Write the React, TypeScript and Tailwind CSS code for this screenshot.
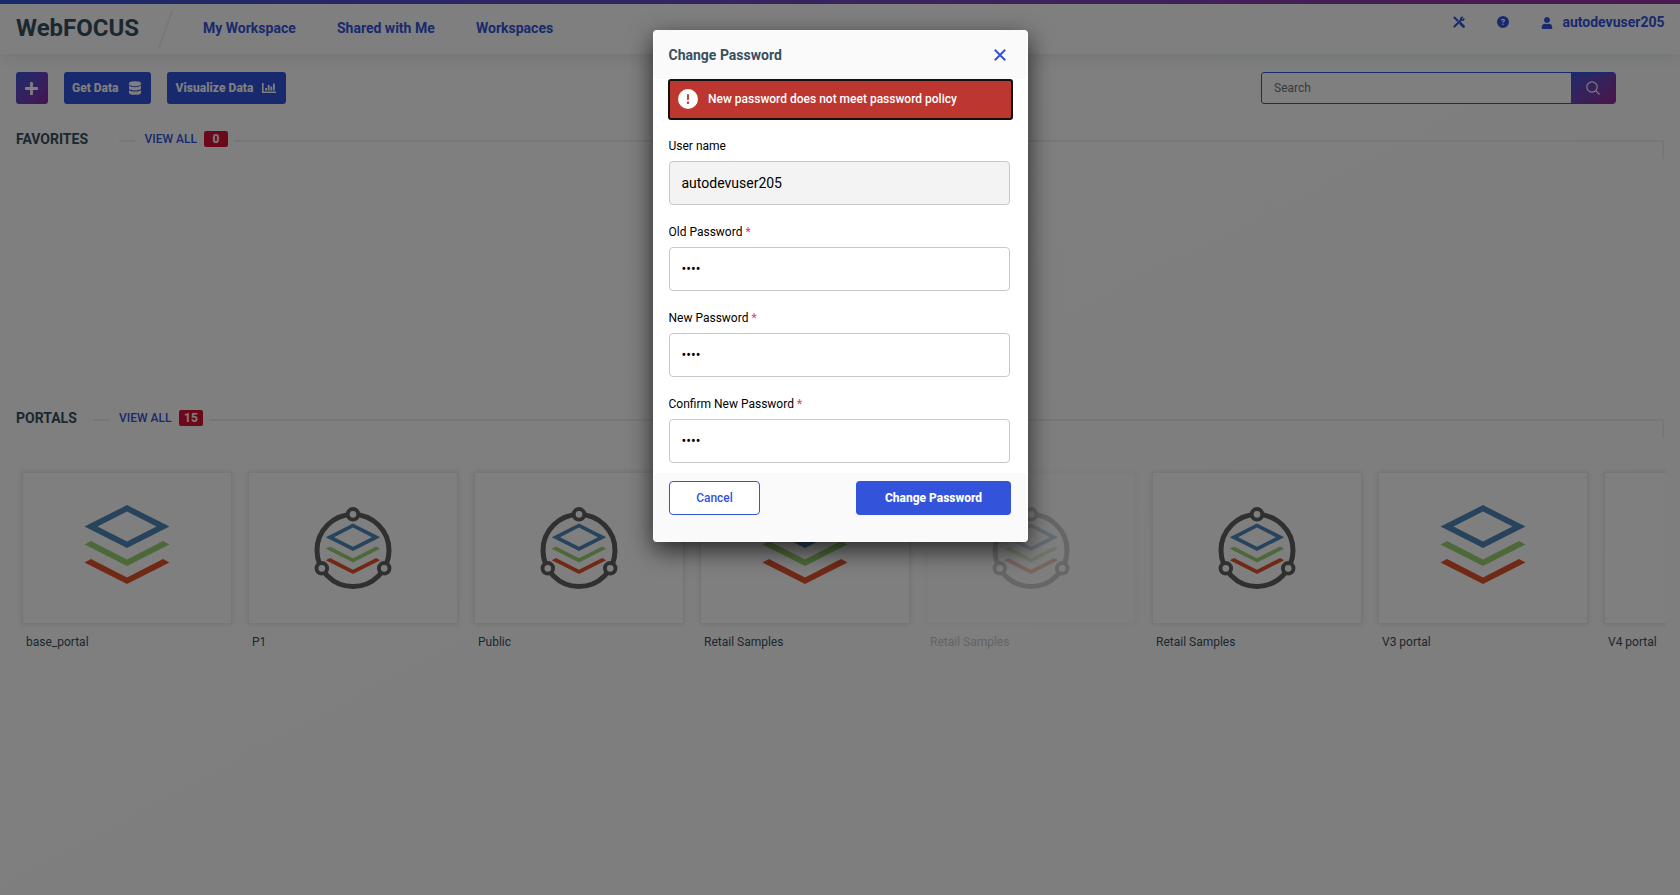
import React from "react";
import { FaPlus, FaDatabase, FaUser } from "react-icons/fa";
import { FaCircleExclamation, FaCircleQuestion } from "react-icons/fa6";

function LayersShape() {
  return (
    <>
      <path d="M0 -21.5 L42.5 0 L0 21.5 L-42.5 0Z M0 -15 L-29.5 0 L0 15 L29.5 0Z" fill="#5086b8" fillRule="evenodd" />
      <path d="M-42.5 18 L-36 14.5 L0 32.8 L36 14.5 L42.5 18 L0 39.5Z" fill="#9cd273" />
      <path d="M-42.5 36 L-36 32.5 L0 50.8 L36 32.5 L42.5 36 L0 57.5Z" fill="#e2532d" />
    </>
  );
}

function LayersIcon() {
  return (
    <svg width="208" height="150" viewBox="0 0 208 150">
      <g transform="translate(104 53.6)"><LayersShape /></g>
    </svg>
  );
}

function PortalIcon() {
  return (
    <svg width="208" height="150" viewBox="0 0 208 150">
      <circle cx="104" cy="77.5" r="36" fill="none" stroke="#606060" strokeWidth="5" />
      {[[104, 41.3], [72.8, 95.3], [135.2, 95.3]].map(([x, y]) => (
        <circle key={x} cx={x} cy={y} r="5.3" fill="#fff" stroke="#606060" strokeWidth="3.9" />
      ))}
      <g transform="translate(104 64.2) scale(.64)"><LayersShape /></g>
    </svg>
  );
}

const portals = [
  { name: "base_portal", kind: "layers" },
  { name: "P1", kind: "portal" },
  { name: "Public", kind: "portal" },
  { name: "Retail Samples", kind: "layers" },
  { name: "Retail Samples", kind: "portal", faded: true },
  { name: "Retail Samples", kind: "portal" },
  { name: "V3 portal", kind: "layers" },
  { name: "V4 portal", kind: "empty" },
];

function SectionHead({ title, count, titleClass, linkClass }: { title: string; count: number; titleClass: string; linkClass: string }) {
  return (
    <div className="flex h-7 items-start pl-4 pr-4">
      <h2 className={"text-[14px] font-bold leading-4 text-[#37505f] " + titleClass}>{title}</h2>
      <span className="mt-[9px] h-[2px] w-4 shrink-0 bg-[#eeeeee]" />
      <a className={"shrink-0 text-[12px] font-medium leading-4 text-[#3353db] " + linkClass}>VIEW ALL</a>
      <span className="h-4 w-6 shrink-0 rounded-[2px] bg-[#db1139] text-center text-[12px] font-bold leading-4 text-white">{count}</span>
      <span className="ml-[6px] mt-[9px] h-[19px] flex-1 border-r-2 border-t-2 border-[#eeeeee]" />
    </div>
  );
}

function Field({ label, value, required, disabled }: { label: string; value: string; required?: boolean; disabled?: boolean }) {
  return (
    <div className="h-[86px]">
      <label className="-ml-[0.5px] block h-[23px] text-[12px] leading-4 text-black">
        {label}
        {required && <span className="text-[#e0405a]"> *</span>}
      </label>
      <input
        readOnly
        type={disabled ? "text" : "password"}
        value={value}
        className={"block h-11 w-[341px] rounded-[4px] border border-[#c8c8c8] pl-[11.5px] text-[14px] text-black outline-none " + (disabled ? "bg-[#f3f3f3]" : "bg-white")}
      />
    </div>
  );
}

export default function App() {
  return (
    <div className="relative h-[895px] w-[1680px] overflow-hidden bg-gradient-to-br from-white to-[#fcfcfc] font-[Roboto,sans-serif]">
      <div className="h-1 bg-gradient-to-r from-[#3353db] to-[#9f2fa8]" />
      <header className="flex h-[50px] bg-white pl-4 shadow-[0_2px_16px_rgba(55,80,95,0.14)]">
        <div className="w-[142px] pt-[10px] text-[24px] font-bold leading-7 text-[#37505f]">WebFOCUS</div>
        <svg width="15" height="38" className="mt-[7px]"><path d="M14 0 L1 37" stroke="#f0f0f0" strokeWidth="2" /></svg>
        <nav className="flex pl-[30px] pt-[16px] text-[14px] font-bold leading-4 text-[#3353db]">
          <a className="w-[134px]">My Workspace</a>
          <a className="w-[139px]">Shared with Me</a>
          <a>Workspaces</a>
        </nav>
        <div className="ml-auto flex pr-[15.5px] pt-[12px] text-[#3353db]">
          <svg width="12" height="12" viewBox="0 0 12 12" className="mr-8" fill="none" stroke="currentColor">
            <path d="M.8 1 L5 5" strokeWidth="2" />
            <path d="M7.6 7.6 L10.5 10.5" strokeWidth="2.8" strokeLinecap="round" />
            <path d="M1.4 10.6 L8 4" strokeWidth="2.1" strokeLinecap="round" />
            <path d="M9.7 .9 L7.9 2.4 L8.1 4 L9.8 4.2 L11.3 2.4" strokeWidth="1.7" />
          </svg>
          <FaCircleQuestion className="mr-8 size-[12px]" />
          <FaUser className="mr-[9.5px] mt-[0.5px] h-[12px] w-[12px]" />
          <span className="mt-[-2px] text-[14px] font-bold leading-4">autodevuser205</span>
        </div>
      </header>

      <div className="flex h-[50px] items-end pl-4 pr-16">
        <button className="mr-4 flex size-8 items-center justify-center rounded-[3px] bg-gradient-to-br from-[#3353db] to-[#8a24a5] pr-px text-white"><FaPlus size={15} /></button>
        <button className="mr-4 flex h-8 w-[87px] items-center justify-between rounded-[3px] bg-[#3353db] pl-2 pr-[10px] text-[12px] font-extrabold text-white">Get Data <FaDatabase className="h-[14px] w-[12px]" /></button>
        <button className="flex h-8 w-[119px] items-center justify-between rounded-[3px] bg-[#3353db] pl-[8.5px] pr-[10px] text-[12px] font-extrabold tracking-[0.06px] text-white">
          Visualize Data
          <svg width="14" height="12" fill="currentColor"><path d="M0 1h1.6v8.6H14V11H0zM3.2 6h1.8v2.5H3.2zM5.8 3h1.8v5.5H5.8zM8.4 4.5h1.8v4H8.4zM11 1.5h1.8v7H11z" /></svg>
        </button>
        <div className="ml-auto flex h-8 w-[355px] overflow-hidden rounded-[3px] border border-[#3353db] bg-white">
          <span className="flex-1 pl-3 text-[12px] leading-[30px] text-[#757575]">Search</span>
          <span className="-my-px -mr-px flex w-[45px] items-center justify-center bg-gradient-to-br from-[#3353db] to-[#94218f] pr-[2px] text-white">
            <svg width="14" height="14" viewBox="0 0 14 14" fill="none" stroke="currentColor" strokeWidth="1.2"><circle cx="6" cy="6" r="5.2" /><path d="M9.7 9.7 L13.5 13.5" /></svg>
          </span>
        </div>
      </div>

      <div className="mt-[27px] h-[279px]"><SectionHead title="FAVORITES" count={0} titleClass="w-[103px]" linkClass="ml-[9.5px] w-[59.5px]" /></div>
      <SectionHead title="PORTALS" count={15} titleClass="w-[77px]" linkClass="ml-[10px] w-[60px]" />

      <div className="mr-[14px] flex gap-4 overflow-hidden pb-8 pl-[22px] pt-[34px]">
        {portals.map((p, i) => (
          <div key={i} className={"w-[210px] shrink-0 " + (p.faded ? "opacity-30" : "")}>
            <div className="h-[152px] border border-[#ececec] bg-white shadow-[0_0_5px_rgba(0,0,0,0.12)]">
              {p.kind === "layers" && <LayersIcon />}
              {p.kind === "portal" && <PortalIcon />}
            </div>
            <div className="pl-1 pt-[10px] text-[12px] leading-4 text-[#37505f]">{p.name}</div>
          </div>
        ))}
      </div>

      <div className="absolute inset-0 bg-black/50">
        <section className="ml-[653px] mt-[30px] flex h-[512px] w-[375px] flex-col rounded-[4px] bg-white shadow-[0_8px_24px_rgba(0,0,0,0.7)]">
          <div className="mx-px flex h-[49px] items-center justify-between rounded-[4px] bg-[#fafafa] pl-[14.5px] pr-[21px]">
            <h1 className="pt-[2px] text-[14px] font-bold text-[#37505f]">Change Password</h1>
            <svg width="12" height="12" viewBox="0 0 12 12" stroke="#3353db" strokeWidth="2"><path d="M.8 .8 L11.2 11.2 M11.2 .8 L.8 11.2" /></svg>
          </div>
          <div className="ml-[15px] flex h-[41px] w-[345px] items-center rounded-[3px] border-2 border-[#111] bg-[#bd362f] pb-[2px] pl-[8px] text-[12px] font-medium text-white">
            <FaCircleExclamation size={20} className="mr-[10px]" />New password does not meet password policy
          </div>
          <form className="h-[353px] pl-4 pt-[18px]">
            <Field label="User name" value="autodevuser205" disabled />
            <Field label="Old Password" value="abcd" required />
            <Field label="New Password" value="abcd" required />
            <Field label="Confirm New Password" value="abcd" required />
          </form>
          <div className="mx-px flex flex-1 justify-between rounded-[4px] bg-[#fafafa] pl-[15px] pr-4 pt-2 text-[12px]">
            <button className="h-[34px] w-[91px] rounded-[4px] border border-[#3353db] bg-white font-medium text-[#3353db]">Cancel</button>
            <button className="h-[34px] w-[155px] rounded-[4px] bg-[#3353db] font-extrabold text-white">Change Password</button>
          </div>
        </section>
      </div>
    </div>
  );
}
